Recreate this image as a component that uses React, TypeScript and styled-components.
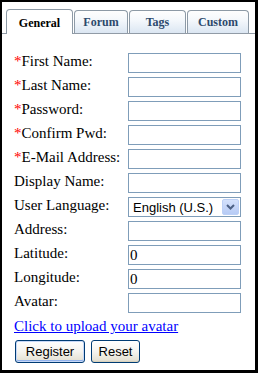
import React from "react";
import styled, { createGlobalStyle } from "styled-components";

const Global = createGlobalStyle`
  html, body { margin: 0; padding: 0; background: #fff; }
  * { box-sizing: border-box; }
`;

const Frame = styled.div`
  width: 258px;
  height: 373px;
  border-style: solid;
  border-color: #000;
  border-width: 2px 3px 3px 2px;
  background: #fff;
  font-family: "Liberation Serif", "Times New Roman", serif;
`;

const TabStrip = styled.div`
  display: flex;
  align-items: flex-end;
  gap: 1px;
  padding: 7px 0 0 4px;
  border-bottom: 1px solid #919ba6;
`;

const Tab = styled.div<{ $active?: boolean; $w: number }>`
  width: ${(p) => p.$w}px;
  height: ${(p) => (p.$active ? 25 : 23)}px;
  margin-bottom: ${(p) => (p.$active ? -1 : 0)}px;
  padding-top: ${(p) => (p.$active ? 2 : 0)}px;
  display: flex;
  align-items: center;
  justify-content: center;
  border: 1px solid #8d9aa6;
  border-bottom: none;
  border-radius: 4px 4px 0 0;
  background: ${(p) =>
    p.$active ? "#fff" : "linear-gradient(#fefefe 0%, #f3f7fb 45%, #dbe6f2 100%)"};
  color: ${(p) => (p.$active ? "#000" : "#2d4a6c")};
  font-weight: bold;
  font-size: 12px;
  position: relative;
  z-index: ${(p) => (p.$active ? 1 : 0)};
`;

const Form = styled.div`
  padding: 19px 0 0 12px;
`;

const Grid = styled.div`
  display: grid;
  grid-template-columns: 114px 113px;
  grid-auto-rows: 20px;
  row-gap: 4px;
`;

const Label = styled.div`
  font-size: 15px;
  line-height: 17px;
  color: #000;
  white-space: nowrap;
`;

const Req = styled.span`
  color: #f00;
`;

const Input = styled.input`
  width: 113px;
  height: 20px;
  border: 1px solid #7f9db9;
  padding: 0 1px;
  margin: 0;
  font-family: "Liberation Serif", "Times New Roman", serif;
  font-size: 15px;
  color: #000;
  background: #fff;
  outline: none;
`;

const SelectBox = styled.div`
  width: 113px;
  height: 20px;
  border: 1px solid #7f9db9;
  display: flex;
  align-items: center;
  justify-content: space-between;
  padding: 0 1px 0 4px;
  font-family: "Liberation Sans", Arial, sans-serif;
  font-size: 13px;
  color: #000;
  background: #fff;
`;

const DropButton = styled.div`
  width: 17px;
  height: 16px;
  border: 1px solid #bcd0f6;
  border-radius: 2px;
  background: linear-gradient(#d4e1fc, #b7cbf5);
  display: flex;
  align-items: center;
  justify-content: center;
`;

const UploadLink = styled.a`
  display: inline-block;
  margin-top: 5px;
  font-size: 15px;
  line-height: 17px;
  color: #00f;
  text-decoration: underline;
`;

const Buttons = styled.div`
  display: flex;
  gap: 6px;
  margin-top: 5px;
  padding-left: 1px;
`;

const Btn = styled.button<{ $w: number; $default?: boolean }>`
  width: ${(p) => p.$w}px;
  height: 23px;
  margin: 0;
  padding: 0;
  border: 1px solid #003c74;
  border-radius: 3px;
  background: linear-gradient(#ffffff 0%, #f5f4ef 50%, #e6e3d6 90%, #d6d0c5 100%);
  box-shadow: ${(p) =>
    p.$default
      ? "inset 0 0 0 1px #c7d8f7, inset 0 -1px 0 1px #91b2ec"
      : "inset 0 -1px 0 0 #d8d2bd"};
  font-family: "Liberation Sans", Arial, sans-serif;
  font-size: 13px;
  color: #000;
`;

const Chevron = () => (
  <svg width="9" height="6" viewBox="0 0 9 6">
    <path d="M1 1 L4.5 4.5 L8 1" fill="none" stroke="#4d6185" strokeWidth="2" />
  </svg>
);

const fields: { label: string; req?: boolean; value?: string; select?: boolean }[] = [
  { label: "First Name:", req: true },
  { label: "Last Name:", req: true },
  { label: "Password:", req: true },
  { label: "Confirm Pwd:", req: true },
  { label: "E-Mail Address:", req: true },
  { label: "Display Name:" },
  { label: "User Language:", select: true },
  { label: "Address:" },
  { label: "Latitude:", value: "0" },
  { label: "Longitude:", value: "0" },
  { label: "Avatar:" },
];

export default function App() {
  return (
    <>
      <Global />
      <Frame>
        <TabStrip>
          <Tab $active $w={67}>General</Tab>
          <Tab $w={54}>Forum</Tab>
          <Tab $w={57}>Tags</Tab>
          <Tab $w={62}>Custom</Tab>
        </TabStrip>
        <Form>
          <Grid>
            {fields.map((f) => (
              <React.Fragment key={f.label}>
                <Label>
                  {f.req && <Req>*</Req>}
                  {f.label}
                </Label>
                {f.select ? (
                  <SelectBox>
                    <span>English (U.S.)</span>
                    <DropButton>
                      <Chevron />
                    </DropButton>
                  </SelectBox>
                ) : (
                  <Input defaultValue={f.value ?? ""} />
                )}
              </React.Fragment>
            ))}
          </Grid>
          <UploadLink href="#">Click to upload your avatar</UploadLink>
          <Buttons>
            <Btn $w={70} $default>Register</Btn>
            <Btn $w={49}>Reset</Btn>
          </Buttons>
        </Form>
      </Frame>
    </>
  );
}
